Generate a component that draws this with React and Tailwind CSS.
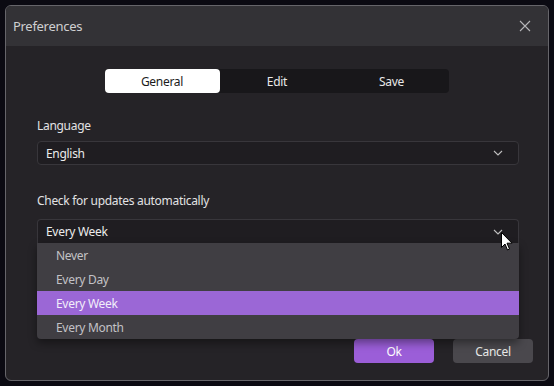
import React from "react";

function Chevron() {
  return (
    <svg width="10" height="6" viewBox="0 0 10 6" className="text-[#bdbdbd]">
      <path d="M1 1l4 4 4-4" fill="none" stroke="currentColor" strokeWidth="1.1" />
    </svg>
  );
}

export default function App() {
  const items = ["Never", "Every Day", "Every Week", "Every Month"];
  return (
    <div
      className="w-[554px] h-[386px] bg-[#0b0a12] p-[5px] relative overflow-hidden tracking-[-0.3px]"
      style={{ fontFamily: "'Noto Sans', 'Open Sans', sans-serif" }}
    >
      <div className="w-[544px] h-[376px] rounded-[6px] border border-[#66656a] bg-[#252327] flex flex-col overflow-hidden">
        <div className="h-[40px] bg-[#333236] flex items-center justify-between pl-[7px] pr-[17px] shrink-0">
          <span className="text-[13px] text-[#cfcfd1] pt-[1px]">Preferences</span>
          <svg width="12" height="12" viewBox="0 0 12 12">
            <path d="M1 1l10 10M11 1L1 11" stroke="#b5b5b8" strokeWidth="1.1" />
          </svg>
        </div>
        <div className="flex flex-col px-[31px] pt-[23px] relative flex-1">
          <div className="flex self-center w-[344px] h-[24px] bg-[#18171a] rounded-[4px] text-[12px] ml-[-1px]">
            <div className="w-[115px] bg-white text-[#1b1b1b] rounded-[4px] flex items-center justify-center pt-[1px]">General</div>
            <div className="w-[115px] text-[#e8e8e8] flex items-center justify-center pt-[1px]">Edit</div>
            <div className="w-[114px] text-[#e8e8e8] flex items-center justify-center pt-[1px]">Save</div>
          </div>
          <div className="text-[12px] text-[#e2e2e4] mt-[25px] leading-[16px]">Language</div>
          <div className="mt-[7px] h-[24px] w-[482px] rounded-[4px] border border-[#38363b] bg-[#1f1d21] flex items-center justify-between pl-[8px] pr-[15px] text-[12px] text-[#ececec]">
            <span className="pt-[1px]">English</span>
            <Chevron />
          </div>
          <div className="text-[12px] text-[#e2e2e4] mt-[28px] leading-[16px]">Check for updates automatically</div>
          <div className="mt-[10px] h-[24px] w-[482px] rounded-t-[4px] border border-b-0 border-[#38363b] bg-[#1f1d21] flex items-center justify-between pl-[8px] pr-[15px] text-[12px] text-[#ececec]">
            <span className="pt-[1px]">Every Week</span>
            <Chevron />
          </div>
          <div className="absolute left-[31px] top-[197px] w-[482px] bg-[#403e43] rounded-b-[4px] shadow-[0_4px_8px_rgba(0,0,0,0.4)] z-10 flex flex-col text-[12px]">
            {items.map((it) => (
              <div
                key={it}
                className={
                  it === "Every Week"
                    ? "h-[24px] flex items-center pl-[19px] pt-[1px] bg-[#9b67d6] text-[#f2eefa]"
                    : "h-[24px] flex items-center pl-[19px] pt-[1px] text-[#c3c2c6]"
                }
              >
                {it}
              </div>
            ))}
          </div>
          <div className="flex justify-end gap-[19px] mt-auto mb-[17px] mr-[-16px]">
            <div className="w-[80px] h-[24px] rounded-[4px] bg-[#9b5ed8] text-white text-[12px] flex items-center justify-center pt-[1px]">Ok</div>
            <div className="w-[80px] h-[24px] rounded-[4px] bg-[#4a484d] text-[#e8e8e8] text-[12px] flex items-center justify-center pt-[1px]">Cancel</div>
          </div>
        </div>
      </div>
      <svg className="absolute left-[501px] top-[232px] z-20" width="12" height="19" viewBox="0 0 12 19">
        <path d="M0.5 0.5v15l3.5-3.5 2.5 6 2-1-2.5-5.8H11z" fill="white" stroke="black" strokeWidth="1" />
      </svg>
    </div>
  );
}
